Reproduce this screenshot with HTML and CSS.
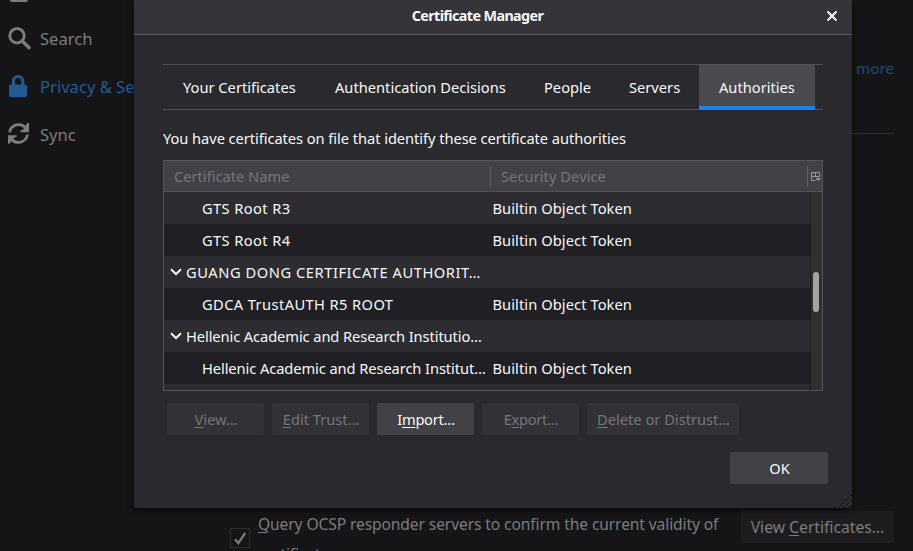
FILE: index.html
```html
<!DOCTYPE html>
<html lang="en">
<head>
<meta charset="utf-8">
<title>Certificate Manager</title>
<link rel="stylesheet" href="styles.css">
</head>
<body>
<div class="page">
  <nav class="sidebar">
    <div class="home-icon"></div>
    <a class="nav-item">
      <svg width="24" height="24" viewBox="0 0 24 24"><circle cx="9" cy="9.700" r="7.200" fill="none" stroke="currentColor" stroke-width="3"/><path d="M14.300 15l6.700 6.800" stroke="currentColor" stroke-width="3.400" stroke-linecap="round"/></svg>
      <span class="nav-search">Search</span>
    </a>
    <a class="nav-item selected">
      <svg width="24" height="24" viewBox="0 0 24 24"><path d="M5.400 12V7.200a4.700 4.700 0 0 1 9.400 0V12" fill="none" stroke="currentColor" stroke-width="3"/><rect x="1" y="10.500" width="18" height="12.600" rx="2" fill="currentColor"/></svg>
      <span class="nav-privacy">Privacy &amp; Security</span>
    </a>
    <a class="nav-item">
      <svg width="24" height="24" viewBox="0 0 24 24"><path d="M1.600 10.400A9.200 9.200 0 0 1 17.800 6M19.400 12.600A9.200 9.200 0 0 1 3.200 17" fill="none" stroke="currentColor" stroke-width="2.800"/><path d="M21 .8v9.400h-8.600v-1.400l3-1.500 4.200-6.500zM0 21.800v-8.600h8.800v1.200l-3.200 1.800-4.200 5.600z" fill="currentColor"/></svg>
      <span class="nav-sync">Sync</span>
    </a>
  </nav>
  <main class="content">
    <div class="upper"><a class="more">more</a></div>
    <div class="ocsp">
      <div class="checkbox"><svg width="18" height="18" viewBox="0 0 18 18"><path d="M4 10.200l3.400 4L14.200 4" fill="none" stroke="currentColor" stroke-width="2.300"/></svg></div>
      <p class="ocsp-label"><u>Q</u>uery OCSP responder servers to confirm the current validity of<br>certificates</p>
      <button class="view-certs"><span>View <u>C</u>ertificates…</span></button>
    </div>
  </main>
</div>

<section class="dialog">
  <header class="titlebar"><h1>Certificate Manager</h1>
    <svg class="close" width="12" height="12" viewBox="0 0 12 12"><path d="M1.500 1.500l9 9M10.500 1.500l-9 9" stroke="currentColor" stroke-width="2"/></svg>
  </header>
  <div class="body">
    <div class="tabs">
      <div class="tab">Your Certificates</div>
      <div class="tab">Authentication Decisions</div>
      <div class="tab">People</div>
      <div class="tab">Servers</div>
      <div class="tab active">Authorities</div>
    </div>
    <p class="intro">You have certificates on file that identify these certificate authorities</p>
    <div class="tree">
      <div class="tree-head">
        <div class="col-name">Certificate Name</div>
        <div class="col-device">Security Device</div>
        <div class="picker"><svg width="11" height="11" viewBox="0 0 11 11"><path d="M5.500 9.500H1.500V1.500H9.500V6M1.500 5.500H9.500M5.500 1.500V5.500" fill="none" stroke="currentColor"/><path d="M5.500 7h5.500L8.200 10z" fill="currentColor"/></svg></div>
      </div>
      <div class="tree-body">
        <div class="rows">
          <div class="row"><span class="leaf mixed">GTS Root R3</span><span class="device">Builtin Object Token</span></div>
          <div class="row"><span class="leaf mixed">GTS Root R4</span><span class="device">Builtin Object Token</span></div>
          <div class="row"><span class="group caps"><svg width="12" height="8" viewBox="0 0 12 8"><path d="M1 1.200l5 5 5-5" fill="none" stroke="currentColor" stroke-width="2"/></svg>GUANG DONG CERTIFICATE AUTHORIT…</span></div>
          <div class="row"><span class="leaf mixed">GDCA TrustAUTH R5 ROOT</span><span class="device">Builtin Object Token</span></div>
          <div class="row"><span class="group"><svg width="12" height="8" viewBox="0 0 12 8"><path d="M1 1.200l5 5 5-5" fill="none" stroke="currentColor" stroke-width="2"/></svg>Hellenic Academic and Research Institutio…</span></div>
          <div class="row"><span class="leaf">Hellenic Academic and Research Institut…</span><span class="device">Builtin Object Token</span></div>
          <div class="row"></div>
        </div>
        <div class="scrollbar"><div class="thumb"></div></div>
      </div>
    </div>
    <div class="actions">
      <button disabled><span><u>V</u>iew…</span></button>
      <button disabled><span><u>E</u>dit Trust…</span></button>
      <button class="snug"><span>I<u>m</u>port…</span></button>
      <button class="snug" disabled><span>E<u>x</u>port…</span></button>
      <button class="wide" disabled><span><u>D</u>elete or Distrust…</span></button>
    </div>
    <div class="footer"><button>OK</button></div>
  </div>
  <svg class="resizer" width="14" height="14" viewBox="0 0 14 14"><path d="M1 14L14 1M6 14l8-8M11 14l3-3" stroke="#17171a" stroke-width="1.200"/><path d="M2.200 14L14 2.200M7.200 14L14 7.200" stroke="#434348" stroke-width=".8"/></svg>
</section>
</body>
</html>
```
FILE: styles.css
```css
* { box-sizing: border-box; }
body {
  margin: 0;
  width: 913px;
  height: 551px;
  overflow: hidden;
  background: #151517;
  color: #f9f9fa;
  font: 14.667px/20px "Noto Sans", sans-serif;
}
h1, p { margin: 0; }
u { text-underline-offset: 2px; text-decoration-thickness: 1px; }
button {
  font: inherit;
  color: inherit;
  border: 0;
  border-radius: 2px;
  background: #424146;
  padding: 0;
  height: 32px;
}

.page { display: flex; height: 551px; color: #7c7c7d; }
.sidebar { width: 134px; overflow: hidden; padding-left: 8px; }
.home-icon { width: 18px; height: 2px; margin: 0 0 13px 2px; background: #7c7c7d; border-radius: 0 0 3px 3px; }
.nav-item { display: flex; align-items: center; gap: 8px; height: 48px; font-size: 16.600px; white-space: nowrap; }
.nav-item svg { flex: none; margin-bottom: 3px; }
.nav-item.selected { color: #245a94; }

.content { flex: 1; display: flex; flex-direction: column; justify-content: space-between; padding: 0 19px 0 96px; overflow: hidden; }
.upper { height: 134px; border-bottom: 1px solid #303032; padding-top: 58px; text-align: right; }
.more { color: #1d4976; font-size: 15.200px; }
.ocsp { display: flex; height: 40px; }
.checkbox { width: 20px; height: 20px; margin: 17px 8px 0 0; border: 1px solid #303033; }
.checkbox svg { display: block; }
.ocsp-label { width: 483px; height: 40px; margin-top: -2px; line-height: 30px; font-size: 15.600px; letter-spacing: -.11px; white-space: nowrap; }
.view-certs { width: 153px; flex: none; background: #1d1d20; font-size: 15.700px; }

.dialog {
  position: absolute;
  left: 134px;
  top: 0;
  width: 718px;
  height: 508px;
  background: #2a2a2e;
  border-radius: 0 0 2px 2px;
  box-shadow: 0 2px 6px rgba(0, 0, 0, .6);
}
.titlebar { display: flex; align-items: center; height: 35px; padding-right: 14px; background: #343439; border-bottom: 1px solid #5b5b5f; }
.titlebar h1 { flex: 1; padding: 0 5px 2px 0; font-size: 14.300px; line-height: 20px; letter-spacing: -.58px; text-align: center; }
.close { flex: none; margin-bottom: 3px; }
.body { padding: 29px 24px 0 29px; }
.tabs { display: grid; grid-template-columns: 152px 209px 85px 90px 116px; width: 660px; height: 46px; border: solid #515156; border-width: 1px 0; }
.tab { padding: 12px 0 0 20px; white-space: nowrap; }
.tab.active { background: #4a4a4f; border-bottom: 4px solid #1a82ea; margin-bottom: -1px; }
.intro { margin-top: 18px; letter-spacing: -.055px; white-space: nowrap; }

.tree { width: 660px; height: 231px; margin-top: 12px; border: 1px solid #55555a; overflow: hidden; }
.tree-head { display: flex; align-items: center; height: 31px; background: #414146; border-bottom: 1px solid #515156; color: #77777b; }
.col-name { width: 327px; height: 21px; padding-left: 10px; border-right: 1px solid #606065; }
.col-device { width: 317px; height: 21px; padding-left: 10px; border-right: 1px solid #606065; letter-spacing: .06px; }
.picker { flex: 1; display: flex; justify-content: center; color: #98989b; }
.picker svg { flex: none; }
.tree-body { display: flex; height: 198px; }
.rows { width: 646px; }
.row { display: flex; align-items: center; height: 32px; background: #2c2c31; white-space: nowrap; }
.row:nth-child(even) { background: #202024; }
.leaf { width: 328.500px; padding-left: 38px; letter-spacing: -.08px; }
.leaf.mixed { letter-spacing: .4px; }
.device { letter-spacing: .08px; }
.group { display: flex; align-items: center; gap: 4px; padding-left: 6px; letter-spacing: -.09px; }
.group.caps { letter-spacing: .55px; }
.scrollbar { width: 12px; border-left: 1px solid #1b1b1b; background: #303030; padding: 80px 0 0 2px; }
.thumb { width: 6px; height: 40px; border-radius: 3px; background: #a4a4a4; }

.actions { display: flex; gap: 8px; margin: 12px 0 0 4px; }
.actions button { width: 97px; padding-left: 1px; }
.actions .snug { letter-spacing: -.3px; }
.actions .wide { width: 152px; }
.actions button:disabled { background: #313136; color: #76767a; }
.footer { display: flex; justify-content: flex-end; margin-top: 17px; }
.footer button { width: 98px; padding-left: 1px; }
.footer { padding-right: 0; }
.resizer { position: absolute; right: 0; bottom: 0; }
```
